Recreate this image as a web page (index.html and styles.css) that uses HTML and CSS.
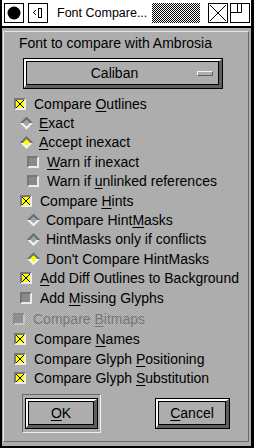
FILE: index.html
```html
<!DOCTYPE html>
<html lang="en">
<head>
    <meta charset="utf-8" />
    <title>Font Compare</title>
    <link rel="stylesheet" href="styles.css">
</head>
<body>
    <div class="win">
        <div class="titlebar">
            <span class="tbox tbox-menu">
                <svg width="18" height="18"><circle cx="9" cy="9" r="6.5" fill="#000"/></svg>
            </span>
            <span class="tbox tbox-shade">
                <svg width="16" height="18"><path d="M6 6h1v1H6zM5 7h1v1H5zM4 8h1v1H4zM5 9h1v1H5zM6 10h1v1H6z" fill="#000"/><rect x="9.5" y="4.5" width="3" height="9" fill="none" stroke="#000"/></svg>
            </span>
            <span class="title">Font Compare...</span>
            <span class="stipple"></span>
            <span class="tbox tbox-close">
                <svg width="18" height="18"><path d="M1 1L17 17M17 1L1 17" stroke="#000" stroke-width="1"/></svg>
            </span>
            <span class="tbox tbox-max">
                <svg width="18" height="18"><path d="M6.5 0V8.5H0" stroke="#000" fill="none"/><path d="M6.5 8.5H10.5V0" stroke="#000" fill="none"/></svg>
            </span>
        </div>
        <div class="body">
            <div class="panel">
                <div class="heading">Font to compare with Ambrosia</div>
                <div class="btn btn-wide">
                    <div class="bev">
                        <div class="face">
                            <span class="face-text">Caliban</span>
                            <span class="menu-bar"></span>
                        </div>
                    </div>
                </div>

                <div class="rows">
                    <div class="row l0"><span class="cb on"></span><span>Compare <u>O</u>utlines</span></div>
                    <div class="row l1"><span class="rd"></span><span><u>E</u>xact</span></div>
                    <div class="row l1"><span class="rd on"></span><span><u>A</u>ccept inexact</span></div>
                    <div class="row l2"><span class="cb"></span><span><u>W</u>arn if inexact</span></div>
                    <div class="row l2"><span class="cb"></span><span>Warn if <u>u</u>nlinked references</span></div>
                    <div class="row l1"><span class="cb on"></span><span>Compare <u>H</u>ints</span></div>
                    <div class="row l2"><span class="rd"></span><span>Compare Hint<u>M</u>asks</span></div>
                    <div class="row l2"><span class="rd"></span><span>HintMasks only if conflicts</span></div>
                    <div class="row l2"><span class="rd on"></span><span>Don't Compare HintMasks</span></div>
                    <div class="row l1"><span class="cb on"></span><span><u>A</u>dd Diff Outlines to Background</span></div>
                    <div class="row l1"><span class="cb"></span><span>Add <u>M</u>issing Glyphs</span></div>
                    <div class="row row-off"><span class="cb off"></span><span>Compare <u>B</u>itmaps</span></div>
                    <div class="row l0 tall"><span class="cb on"></span><span>Compare <u>N</u>ames</span></div>
                    <div class="row l0 tall"><span class="cb on"></span><span>Compare Glyph <u>P</u>ositioning</span></div>
                    <div class="row l0 tall"><span class="cb on"></span><span>Compare Glyph <u>S</u>ubstitution</span></div>
                </div>

                <div class="actions">
                    <div class="default-frame">
                        <div class="btn btn-small">
                            <div class="bev"><div class="face"><span class="face-text"><u>O</u>K</span></div></div>
                        </div>
                    </div>
                    <div class="btn btn-small">
                        <div class="bev"><div class="face"><span class="face-text"><u>C</u>ancel</span></div></div>
                    </div>
                </div>
            </div>
        </div>
    </div>
</body>
</html>
```

FILE: styles.css
```css
/* Page */
body {
    margin: 0;
    background: #000;
    font-family: "Liberation Sans", Arial, sans-serif;
    font-size: 14px;
    color: #000;
}

u {
    text-decoration-thickness: 1px;
    text-underline-offset: 2px;
}

/* Window frame */
.win {
    width: 254px;
    height: 448px;
    box-sizing: border-box;
    padding: 0 3px 2px 2px;
    background: #000;
    display: flex;
    flex-direction: column;
}

/* Title bar */
.titlebar {
    height: 26px;
    background: #fff;
    display: flex;
    align-items: center;
    margin-bottom: 2px;
    padding-left: 2px;
}

.tbox {
    width: 18px;
    height: 18px;
    border: 1px solid #000;
    display: flex;
}

.tbox-shade {
    margin-left: 4px;
}

.title {
    font-size: 12.5px;
    margin-left: 9px;
    width: 95px;
    white-space: nowrap;
}

.stipple {
    width: 48px;
    height: 20px;
    background: repeating-conic-gradient(#000 0 25%, #fff 0 50%) 0 0 / 2px 2px;
}

.tbox-close {
    margin-left: 8px;
}

.tbox-max {
    margin-left: 2px;
}

/* Dialog body */
.body {
    flex: 1;
    background: #adadad;
    padding: 3px 2px 4px 1px;
    display: flex;
}

.panel {
    flex: 1;
    border: 1px solid;
    border-color: #e4e4e4 #6a6a6a #6a6a6a #e4e4e4;
}

.heading {
    margin: 3px 0 0 15px;
    line-height: 16px;
}

/* Buttons */
.btn {
    border: 1px solid #000;
    box-sizing: border-box;
    height: 31px;
    display: flex;
}

.bev {
    flex: 1;
    display: flex;
    border-style: solid;
    border-width: 2px 3px 3px 2px;
    border-color: #fafafa #5e5e5e #5e5e5e #fafafa;
}

.face {
    flex: 1;
    display: flex;
    align-items: center;
    border: 1px solid #000;
    background: #adadad;
}

.face-text {
    flex: 1;
    text-align: center;
    line-height: 16px;
}

.btn-wide {
    width: 200px;
    margin: 7px 0 0 19px;
}

.btn-wide .face {
    padding-left: 5px;
}

.menu-bar {
    width: 14px;
    height: 3px;
    border: 1px solid;
    border-color: #f4f4f4 #5e5e5e #5e5e5e #f4f4f4;
    margin-right: 5px;
}

.btn-small {
    width: 75px;
}

/* Option rows */
.rows {
    margin-top: 5px;
}

.row {
    height: 19.4px;
    display: flex;
    align-items: center;
    white-space: nowrap;
}

.row.tall {
    height: 19.6px;
}

.l0 { padding-left: 10px; }
.l1 { padding-left: 16px; }
.l2 { padding-left: 23px; }

.row-off {
    margin: 1px 0 0 5px;
    height: 21px;
    width: 139px;
    box-sizing: border-box;
    padding: 1px 0 0 4px;
    color: #787878;
    background: repeating-conic-gradient(#b9b9b9 0 25%, #a3a3a3 0 50%) 0 0 / 2px 2px;
}

/* Checkbox indicator */
.cb {
    width: 8px;
    height: 8px;
    border: 2px solid;
    border-color: #777 #ececec #ececec #777;
    background: #8a8a8a;
    margin-right: 8px;
    flex: none;
}

.cb.on {
    background:
        linear-gradient(45deg, transparent calc(50% - 0.6px), #000 calc(50% - 0.6px), #000 calc(50% + 0.6px), transparent calc(50% + 0.6px)),
        linear-gradient(-45deg, transparent calc(50% - 0.6px), #000 calc(50% - 0.6px), #000 calc(50% + 0.6px), transparent calc(50% + 0.6px)),
        #ffff00;
}

.cb.off {
    border-color: #8a8a8a #c6c6c6 #c6c6c6 #8a8a8a;
    background: #8f8f8f;
}

/* Diamond radio indicator */
.rd {
    width: 13px;
    height: 13px;
    margin-right: 6px;
    flex: none;
    clip-path: polygon(50% 0, 100% 50%, 50% 100%, 0 50%);
    background: linear-gradient(#6e6e6e 50%, #f4f4f4 50%);
    position: relative;
}

.rd::after {
    content: "";
    position: absolute;
    inset: 3px;
    clip-path: polygon(50% 0, 100% 50%, 50% 100%, 0 50%);
    background: #a4a4a4;
}

.rd.on::after {
    background: #ffff00;
}

/* Bottom buttons */
.actions {
    display: flex;
    align-items: center;
    justify-content: space-between;
    margin: 6px 18px 0 18px;
}

.default-frame {
    border: 1px solid;
    border-color: #6a6a6a #f0f0f0 #f0f0f0 #6a6a6a;
    padding: 3px 2px;
}

.default-frame .btn-small {
    width: 73px;
}
```
